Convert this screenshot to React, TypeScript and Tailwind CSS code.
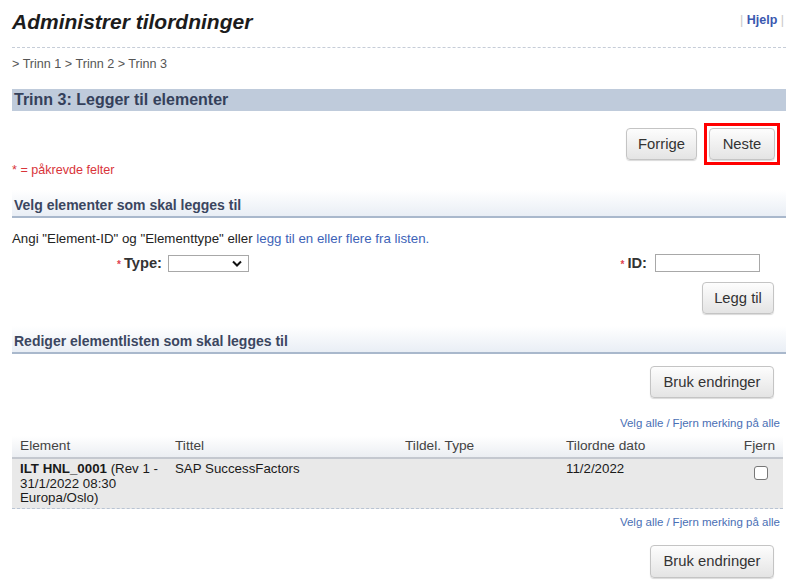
const font = { fontFamily: '"Liberation Sans", Arial, sans-serif' };

function Btn({ label, className = "" }: { label: string; className?: string }) {
  return (
    <button
      className={
        "h-[32px] px-[10px] rounded-[4px] border border-[#c4c4c4] bg-gradient-to-b from-[#fdfdfd] to-[#e4e4e4] text-[14.8px] text-[#333] shadow-[0_1px_1px_rgba(0,0,0,0.15)] " +
        className
      }
    >
      {label}
    </button>
  );
}

function SectionHeader({ title }: { title: string }) {
  return (
    <div className="h-[28px] flex items-end pb-[3px] px-[2px] bg-gradient-to-b from-[#ffffff] to-[#e9eef5] border-b-2 border-[#a9b8cc]">
      <span className="text-[14px] leading-[16px] font-bold text-[#3b4660]">{title}</span>
    </div>
  );
}

function SelectLinks() {
  return (
    <div className="flex justify-end pr-[6px] text-[11.5px] leading-[14px] text-[#4a6fb5]">
      <a>Velg alle</a>
      <span className="mx-[3px]">/</span>
      <a>Fjern merking på alle</a>
    </div>
  );
}

export default function App() {
  return (
    <div className="w-[800px] h-[586px] bg-white overflow-hidden pl-[12px] pr-[14px]" style={font}>
      <div className="flex justify-between items-start border-b border-dashed border-[#c6cdd8] h-[48px]">
        <h1 className="pt-[10px] text-[21px] leading-[24px] font-bold italic text-[#1c1c1c]">
          Administrer tilordninger
        </h1>
        <div className="pt-[11px] pr-[2px] text-[12.5px] text-[#c8c8c8]">
          | <a className="font-bold text-[#3a58b0]">Hjelp</a> |
        </div>
      </div>

      <div className="mt-[8px] text-[12.6px] leading-[16px] text-[#555]">
        &gt; Trinn 1 &gt; Trinn 2 &gt; Trinn 3
      </div>

      <div className="mt-[17px] h-[22px] flex items-center px-[2px] bg-[#bfcbdb]">
        <span className="text-[16px] font-bold text-[#34405a]">Trinn 3: Legger til elementer</span>
      </div>

      <div className="mt-[12px] flex justify-end items-center gap-[7px] pr-[6px]">
        <Btn label="Forrige" className="w-[71px]" />
        <div className="border-[3px] border-[#ff0000] p-[2px]">
          <Btn label="Neste" className="w-[66px]" />
        </div>
      </div>

      <div className="-mt-[3px] text-[12.6px] leading-[16px] text-[#d9343a]">* = påkrevde felter</div>

      <div className="mt-[12px]">
        <SectionHeader title="Velg elementer som skal legges til" />
      </div>

      <div className="mt-[12px] text-[13.3px] leading-[17px] text-[#222]">
        Angi "Element-ID" og "Elementtype" eller{" "}
        <a className="text-[#3d63b8]">legg til en eller flere fra listen.</a>
      </div>

      <div className="mt-[7px] flex items-center h-[18px]">
        <div className="w-[150px] text-right text-[14.7px] font-bold text-[#333]">
          <span className="text-[#e04050] text-[10px] mr-[3px]">*</span>Type:
        </div>
        <div className="ml-[6px] w-[81px] h-[17px] border border-[#a8a8a8] flex items-center justify-end pr-[6px]">
          <svg width="10" height="7" viewBox="0 0 10 7">
            <path d="M1 1.5 L5 5.5 L9 1.5" stroke="#111" strokeWidth="2" fill="none" />
          </svg>
        </div>
        <div className="ml-auto text-[14.7px] font-bold text-[#333]">
          <span className="text-[#e04050] text-[10px] mr-[3px]">*</span>ID:
        </div>
        <div className="ml-[8px] mr-[26px] w-[105px] h-[18px] border border-[#a8a8a8]" />
      </div>

      <div className="mt-[10px] flex justify-end pr-[12px]">
        <Btn label="Legg til" className="w-[72px]" />
      </div>

      <div className="mt-[12px]">
        <SectionHeader title="Rediger elementlisten som skal legges til" />
      </div>

      <div className="mt-[12px] flex justify-end pr-[12px]">
        <Btn label="Bruk endringer" className="w-[124px]" />
      </div>

      <div className="mt-[18px]">
        <SelectLinks />
      </div>

      <div className="mt-[6px] mr-[3px]">
        <div className="h-[23px] grid grid-cols-[155px_230px_161px_1fr_60px] items-center px-[8px] bg-gradient-to-b from-[#ffffff] to-[#ebeef2] border-b-2 border-[#c4c8cf] text-[13.7px] text-[#444]">
          <span>Element</span>
          <span>Tittel</span>
          <span>Tildel. Type</span>
          <span>Tilordne dato</span>
          <span className="text-right">Fjern</span>
        </div>
        <div className="h-[50px] grid grid-cols-[155px_230px_161px_1fr_60px] px-[8px] pt-[3px] bg-[#e9e9e9] border-b border-dashed border-[#b9c4d4] text-[13.3px] leading-[14.5px] text-[#1a1a1a]">
          <div>
            <span className="font-bold">ILT HNL_0001</span> (Rev 1 -<br />31/1/2022 08:30<br />Europa/Oslo)
          </div>
          <div>SAP SuccessFactors</div>
          <div />
          <div>11/2/2022</div>
          <div className="flex justify-end pr-[7px] pt-[4px]">
            <div className="w-[14px] h-[14px] rounded-[3px] border border-[#777] bg-white" />
          </div>
        </div>
      </div>

      <div className="mt-[6px]">
        <SelectLinks />
      </div>

      <div className="mt-[16px] flex justify-end pr-[12px]">
        <Btn label="Bruk endringer" className="w-[124px] h-[33px]" />
      </div>
    </div>
  );
}
